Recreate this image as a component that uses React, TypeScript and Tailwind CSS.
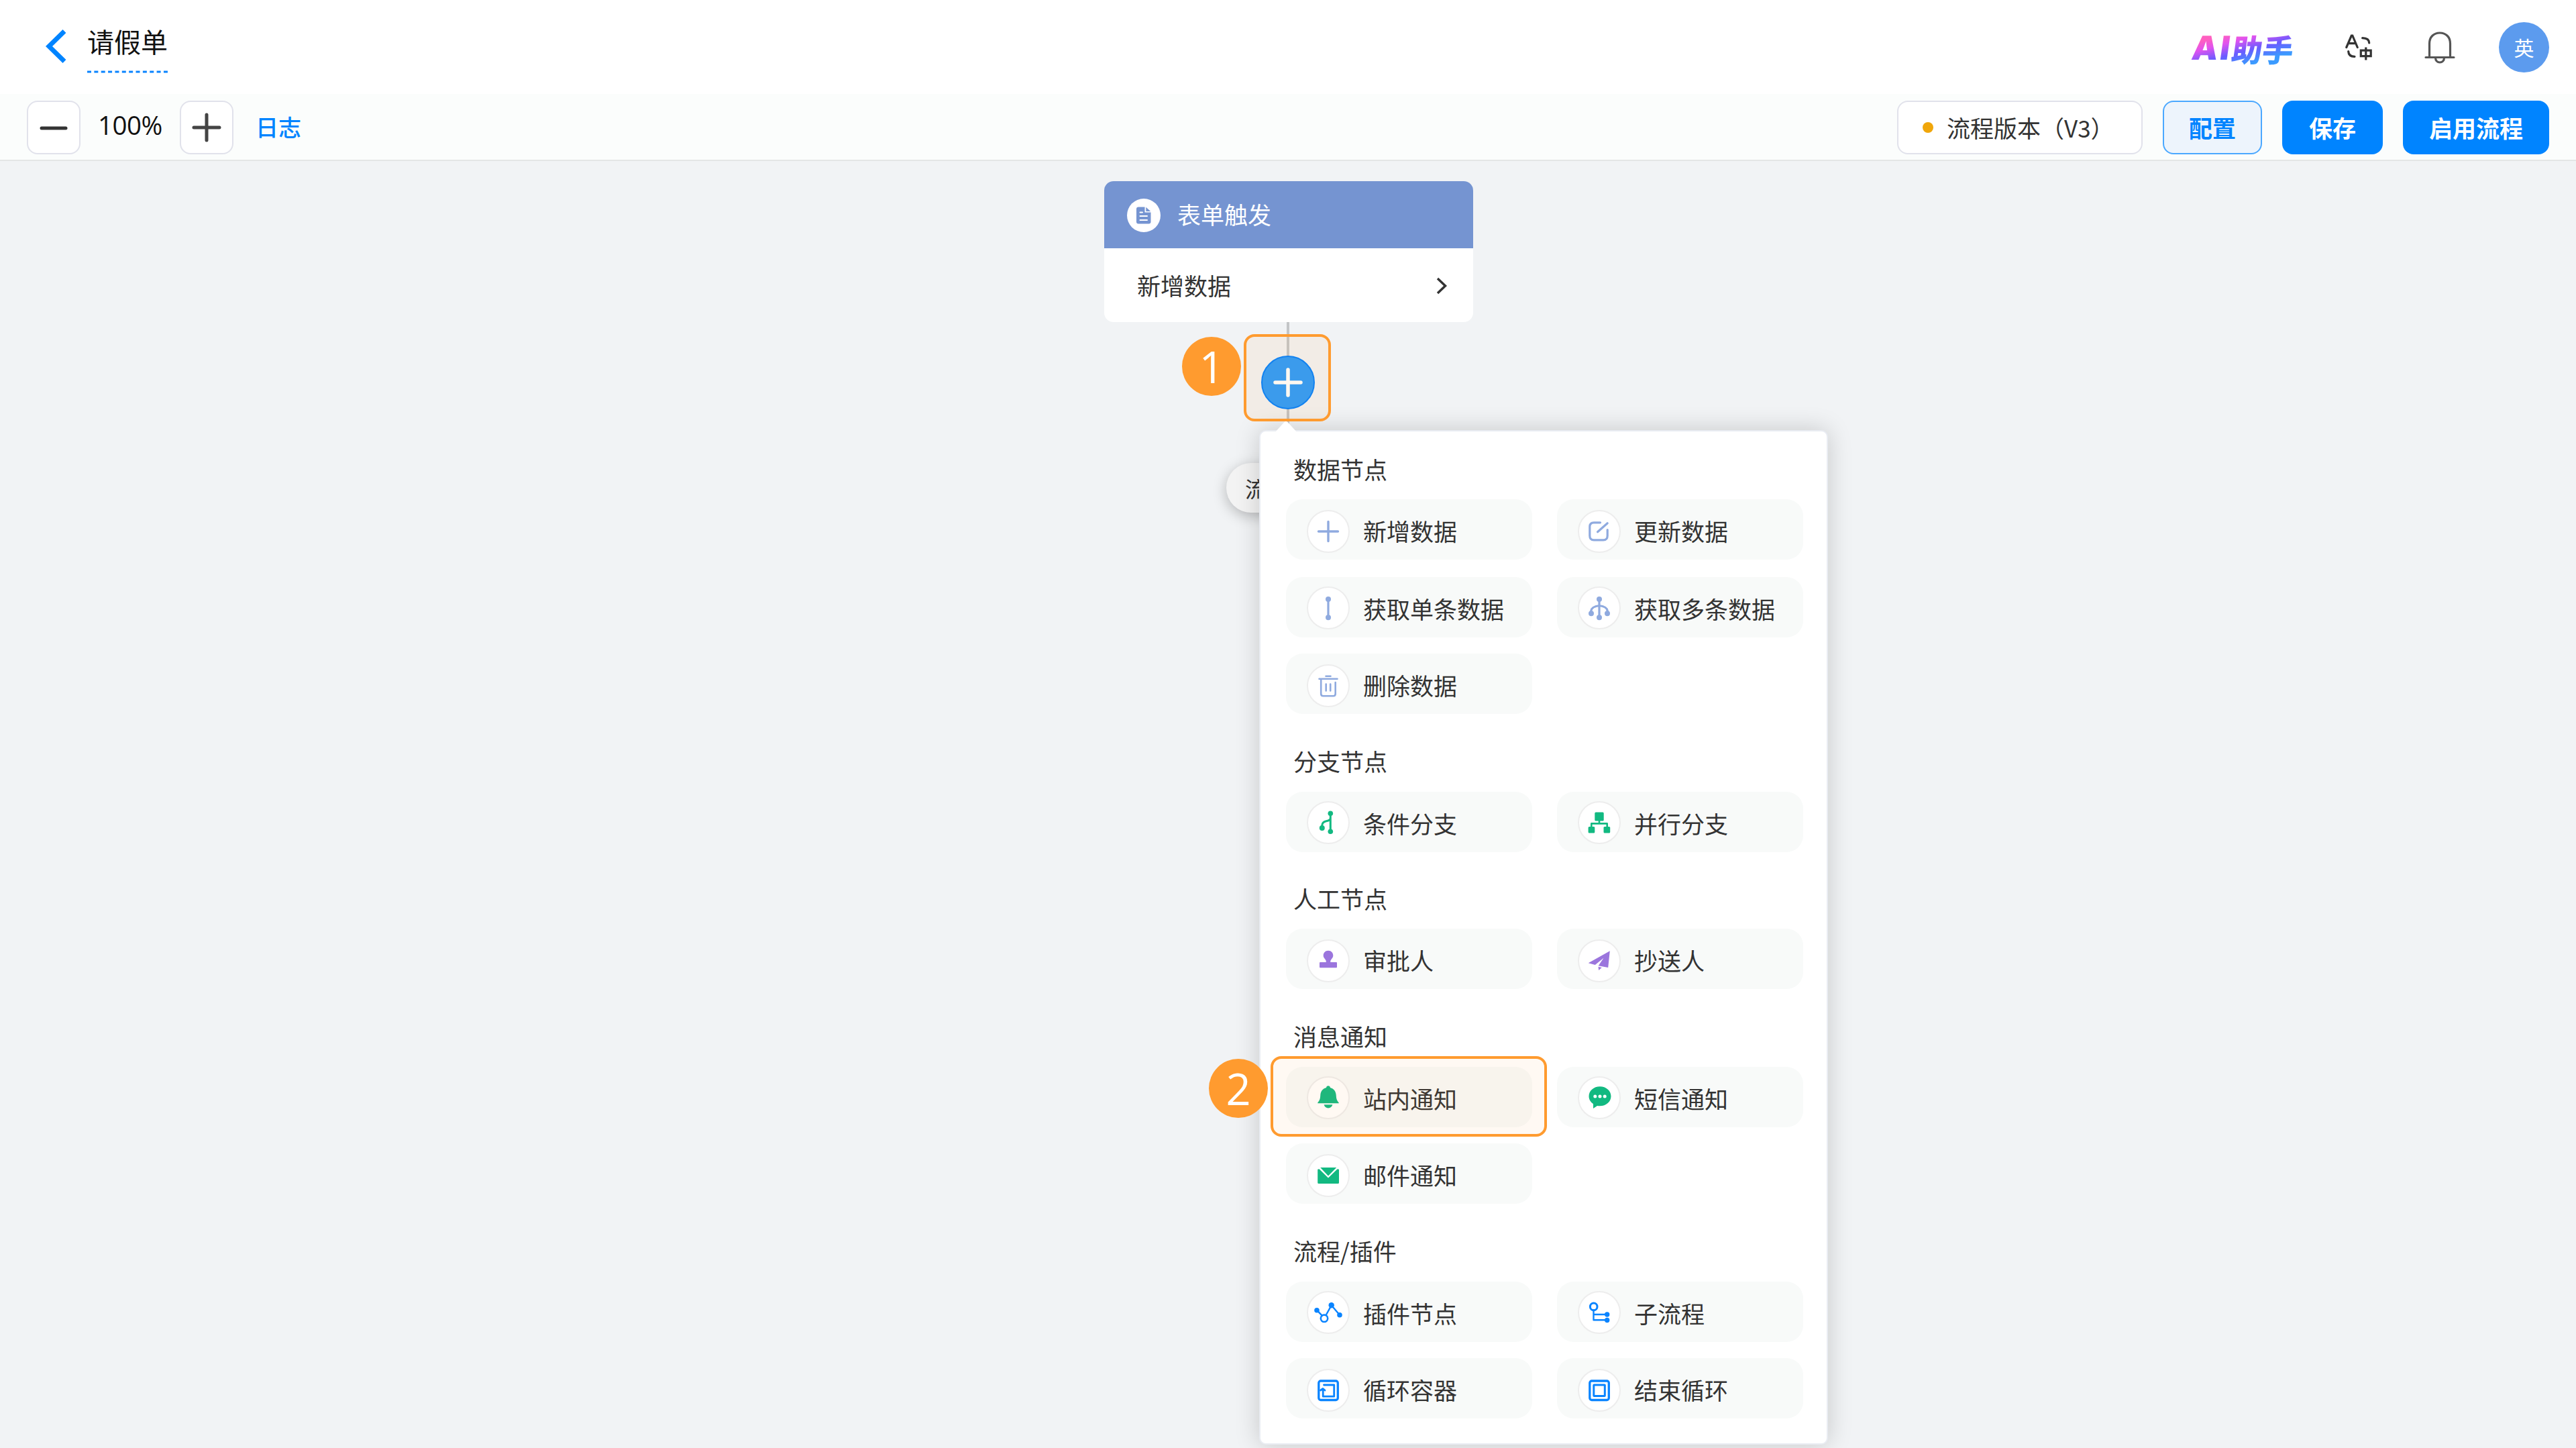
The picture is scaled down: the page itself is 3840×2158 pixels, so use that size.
import type { ReactNode } from "react";

type NodeItem = { label: string; icon: ReactNode; tint: string };
type Section = { title: string; rows: { low: boolean; items: NodeItem[] }[] };

const BLUE = "text-[#8faadf]";
const GREEN = "text-[#12b981]";
const PURPLE = "text-[#9b75dd]";
const AZURE = "text-[#0a84ff]";

function Glyph({ children, width = 3 }: { children: ReactNode; width?: number }) {
  return (
    <svg viewBox="0 0 64 64" className="h-16 w-16 shrink-0" fill="none" stroke="currentColor" strokeWidth={width} strokeLinecap="round" strokeLinejoin="round">
      {children}
    </svg>
  );
}

const Dot = ({ x, y, r = 4 }: { x: number; y: number; r?: number }) => (
  <circle cx={x} cy={y} r={r} fill="currentColor" stroke="none" />
);

const icons = {
  plus: (
    <Glyph width={3.4}>
      <path d="M32 17.5V46.500M17.500 32H46.500" />
    </Glyph>
  ),
  edit: (
    <Glyph width={3.2}>
      <path d="M33.500 18.800H24Q17.800 18.800 17.800 25V38.500Q17.800 44.800 24 44.800H38Q44.200 44.800 44.200 38.500V29.500" />
      <path d="M29.500 32.800L44.200 19.800" />
    </Glyph>
  ),
  single: (
    <Glyph width={3.2}>
      <path d="M32 19V46" />
      <Dot x={32} y={19} />
      <Dot x={32} y={46.300} />
    </Glyph>
  ),
  multi: (
    <Glyph width={3.2}>
      <path d="M32 19V46M19.700 40V36.500Q20.500 30 32 28.500Q43.500 30 44.300 36.500V40" />
      <Dot x={32} y={19} />
      <Dot x={32} y={46.300} />
      <Dot x={20} y={40.300} />
      <Dot x={44} y={40.300} />
    </Glyph>
  ),
  trash: (
    <Glyph width={2.6}>
      <path d="M18.500 21.700H45.500M28.500 17.700H35.500M21.200 22V44Q21.200 47.300 24.500 47.300H39.500Q42.700 47.300 42.700 44V27M28.700 29.500V39.500M35.200 29.500V39.500" />
    </Glyph>
  ),
  branch: (
    <Glyph width={3}>
      <path d="M35.300 18.300V45.300M22.700 40V36.500Q23 31 29 29.800Q35 28.800 35.300 25.500" />
      <Dot x={35.300} y={18.300} r={3.800} />
      <Dot x={35.300} y={45.300} r={3.800} />
      <Dot x={22.800} y={40} r={4} />
    </Glyph>
  ),
  parallel: (
    <Glyph width={2.6}>
      <path d="M32 28V33.400M20.300 39V33.400H43.700V39" />
      <g fill="currentColor" stroke="none">
        <rect x="25.300" y="16.500" width="13.400" height="13" rx="1.500" />
        <rect x="15.600" y="38" width="9.700" height="9.500" rx="1.500" />
        <rect x="38.500" y="38" width="9.700" height="9.500" rx="1.500" />
      </g>
    </Glyph>
  ),
  stamp: (
    <Glyph>
      <path
        fill="currentColor"
        stroke="none"
        d="M32 16.700C27.500 16.700 24.700 20 24.700 24C24.700 28 28.700 30 28.700 32.500V34H20Q19 34 19 35V41.200Q19 42.200 20 42.200H44Q45 42.200 45 41.200V35Q45 34 44 34H35.300V32.500C35.300 30 39.300 28 39.300 24C39.300 20 36.500 16.700 32 16.700Z"
      />
    </Glyph>
  ),
  plane: (
    <Glyph>
      <path fill="currentColor" stroke="none" d="M47.800 17.300L15.700 35.300L25.800 37.900L38.500 27.800L30.700 39.200L45.200 41.900ZM30.500 40.700L35.800 42L31.200 45.900Z" />
    </Glyph>
  ),
  bell: (
    <Glyph>
      <path
        fill="currentColor"
        stroke="none"
        d="M32 14.200C30.200 14.200 29.200 15.300 29 17C23.500 18.500 20.700 22.500 20.300 28C20 33 19.500 36 16.300 39.200V40.300H47.700V39.200C44.500 36 44 33 43.700 28C43.300 22.500 40.500 18.500 35 17C34.800 15.300 33.800 14.200 32 14.200ZM25.600 42.200H38.400C37.500 45.600 35.200 47.400 32 47.400C28.800 47.400 26.500 45.600 25.600 42.200Z"
      />
    </Glyph>
  ),
  chat: (
    <Glyph>
      <path fill="currentColor" stroke="none" d="M33 15.300C42.200 15.300 49.500 21.600 49.500 29.800C49.500 38 42.200 44.300 33 44.300C31.500 44.300 30.200 44.200 29 44L23 48V41.200C19 38.500 16.500 34.500 16.500 29.800C16.500 21.600 23.800 15.300 33 15.300Z" />
      <g fill="white" stroke="none">
        <circle cx="25.800" cy="30" r="2.500" />
        <circle cx="33" cy="30" r="2.500" />
        <circle cx="40.200" cy="30" r="2.500" />
      </g>
    </Glyph>
  ),
  mail: (
    <Glyph>
      <path fill="currentColor" stroke="none" d="M20.200 20H44.200L32 32.600ZM16.200 22.800L18.500 22.200L32 35.600L45.600 22.200L48 22.800V42.500Q48 44 46.500 44H17.700Q16.200 44 16.200 42.500Z" />
    </Glyph>
  ),
  plugin: (
    <Glyph width={2.4}>
      <path d="M15 28.700L23 36.800M28.600 36L36.700 21.300L49 35.700" />
      <circle cx="26" cy="40.800" r="5.200" strokeWidth={2.600} />
      <Dot x={15} y={28.700} r={3.800} />
      <Dot x={36.700} y={21.300} r={4.200} />
      <Dot x={49} y={35.700} r={3.800} />
    </Glyph>
  ),
  subflow: (
    <Glyph width={2.4}>
      <path d="M23.500 28.500V43.300H43.500M23.500 35H43.500" />
      <circle cx="23.700" cy="23.400" r="5.300" strokeWidth={3} />
      <Dot x={43.700} y={35} r={3.700} />
      <Dot x={43.700} y={43.500} r={3.700} />
    </Glyph>
  ),
  loop: (
    <Glyph width={3}>
      <rect x="17.800" y="18" width="28.500" height="28.500" rx="3" strokeWidth={3.300} />
      <path d="M25.500 24H40.700V41.200H24.200V31.500M20.500 32L24 29.500L27 32" strokeWidth={2.800} />
    </Glyph>
  ),
  stop: (
    <Glyph width={3}>
      <rect x="17.800" y="18" width="28.500" height="28.500" rx="3" strokeWidth={3.300} />
      <rect x="23.800" y="24" width="16.500" height="16.500" rx="0.500" />
    </Glyph>
  ),
};

const sections: Section[] = [
  {
    title: "数据节点",
    rows: [
      { low: true, items: [{ label: "新增数据", icon: icons.plus, tint: BLUE }, { label: "更新数据", icon: icons.edit, tint: BLUE }] },
      { low: false, items: [{ label: "获取单条数据", icon: icons.single, tint: BLUE }, { label: "获取多条数据", icon: icons.multi, tint: BLUE }] },
      { low: true, items: [{ label: "删除数据", icon: icons.trash, tint: BLUE }] },
    ],
  },
  {
    title: "分支节点",
    rows: [{ low: false, items: [{ label: "条件分支", icon: icons.branch, tint: GREEN }, { label: "并行分支", icon: icons.parallel, tint: GREEN }] }],
  },
  {
    title: "人工节点",
    rows: [{ low: true, items: [{ label: "审批人", icon: icons.stamp, tint: PURPLE }, { label: "抄送人", icon: icons.plane, tint: PURPLE }] }],
  },
  {
    title: "消息通知",
    rows: [
      { low: false, items: [{ label: "站内通知", icon: icons.bell, tint: GREEN }, { label: "短信通知", icon: icons.chat, tint: GREEN }] },
      { low: true, items: [{ label: "邮件通知", icon: icons.mail, tint: GREEN }] },
    ],
  },
  {
    title: "流程/插件",
    rows: [
      { low: false, items: [{ label: "插件节点", icon: icons.plugin, tint: AZURE }, { label: "子流程", icon: icons.subflow, tint: AZURE }] },
      { low: true, items: [{ label: "循环容器", icon: icons.loop, tint: AZURE }, { label: "结束循环", icon: icons.stop, tint: AZURE }] },
    ],
  },
];

function Header() {
  return (
    <header className="flex h-[140px] shrink-0 items-start justify-between bg-white pr-10 pl-[68px]">
      <div className="flex">
        <svg viewBox="0 0 32 52" className="mt-[43px] h-[52px] w-8" fill="none" stroke="#0084ff" strokeWidth="7">
          <path d="M28 3.500L5 26L28 48.500" />
        </svg>
        <div className="ml-[30px] flex flex-col">
          <span className="mt-[31px] h-[60px] text-[40px] leading-[60px] text-[#111]">请假单</span>
          <svg viewBox="0 0 120 4" className="mt-[14px] h-1 w-[120px]" stroke="#0a84ff" strokeWidth="3">
            <path d="M0 2H120" strokeDasharray="6 4.360" />
          </svg>
        </div>
      </div>
      <div className="flex h-[140px] items-center">
        <div className="mt-[3px] flex skew-x-[-8deg] items-center bg-linear-[165deg,#ff5fc0_22%,#e052f0_36%,#6a5cff_55%,#3b9bff_76%] bg-clip-text text-transparent">
          <span className="font-['Inter'] text-[49px] leading-[60px] font-black tracking-[3px]">AI</span>
          <span className="text-[46px] leading-[60px] font-black">助手</span>
        </div>
        <svg viewBox="0 0 40 40" className="mt-[2px] ml-[77px] h-10 w-10" fill="none" stroke="#333" strokeWidth="3.200" strokeLinecap="round">
          <path d="M1.800 19.500L9.300 2H10.800L18.200 19.500M4.800 13.600H15.400M25.700 5.600Q35.500 5.800 35.700 13M4.700 25.600Q5 33.300 14 33.300" />
          <path d="M23.300 24.200H38.200V32.600H23.300ZM30.800 19.500V38.500" strokeLinecap="butt" />
        </svg>
        <svg viewBox="0 0 46 48" className="mt-[2px] ml-[78px] h-12 w-[46px]" fill="none" stroke="#555" strokeWidth="3.200" strokeLinecap="round">
          <path d="M7.500 38V18C7.500 8 14 2 23 2C32 2 38.500 8 38.500 18V38M2 38.500H44M16.500 39C16.500 43.500 19.500 46 23 46C26.500 46 29.500 43.500 29.500 39" />
        </svg>
        <span className="ml-[65px] flex h-[75px] w-[75px] items-center justify-center rounded-full bg-[#5c9bee] text-[30px] text-white">英</span>
      </div>
    </header>
  );
}

function Toolbar() {
  return (
    <div className="flex h-[100px] shrink-0 items-start justify-between border-b-2 border-[#e4e6e6] bg-[#fbfdfc] px-10 pt-2.5">
      <div className="flex h-20 items-center">
        <button className="flex h-20 w-20 items-center justify-center rounded-2xl border-2 border-[#e1e2eb] bg-white">
          <svg viewBox="0 0 44 44" className="h-11 w-11" stroke="#333" strokeWidth="5" strokeLinecap="round">
            <path d="M4 23H40" />
          </svg>
        </button>
        <span className="mb-[9px] w-[148px] text-center font-['Open_Sans'] text-[38.5px] leading-[50px] tracking-[-0.5px] text-[#111]">100%</span>
        <button className="flex h-20 w-20 items-center justify-center rounded-2xl border-2 border-[#e1e2eb] bg-white">
          <svg viewBox="0 0 44 44" className="h-11 w-11" stroke="#444" strokeWidth="5" strokeLinecap="round">
            <path d="M3 22H41M22 3V41" />
          </svg>
        </button>
        <a className="mb-[3px] ml-[33px] text-[34px] font-medium text-[#0084ff]">日志</a>
      </div>
      <div className="flex text-[35px] leading-[76px]">
        <div className="flex h-20 w-[366px] items-center rounded-2xl border-2 border-[#e1e2eb] bg-white pl-9 text-[#333]">
          <span className="mr-5 h-4 w-4 rounded-full bg-[#f0a60a]" />
          <span className="whitespace-nowrap">流程版本（V3）</span>
        </div>
        <button className="ml-[30px] h-20 w-[148px] rounded-2xl border-2 border-[#4ba8ff] bg-[#edf4fc] font-bold text-[#0084ff]">配置</button>
        <button className="ml-[30px] h-20 w-[150px] rounded-2xl bg-[#0084ff] font-bold text-white">保存</button>
        <button className="ml-[30px] h-20 w-[218px] rounded-2xl bg-[#0084ff] font-bold text-white">启用流程</button>
      </div>
    </div>
  );
}

function NodeMenu() {
  return (
    <div className="absolute top-[401px] left-[1877px] h-[1512px] w-[848px] rounded-[10px] border-2 border-[#e9ecf2] bg-white pt-8 pl-[38px] shadow-[0_0_36px_rgba(0,0,0,0.18)]">
      <svg viewBox="0 0 34 18" className="absolute top-[-16px] left-[21px] h-[18px] w-[34px]" fill="white">
        <path d="M0 18L14.500 2Q17 0 19.500 2L34 18Z" />
      </svg>
      <div className="flex flex-col gap-[46px]">
        {sections.map((section) => (
          <section key={section.title} className="flex flex-col">
            <h3 className="pl-[11px] text-[35px] leading-[48px] text-[#333]">{section.title}</h3>
            <div className="mt-[21px] flex flex-col gap-[25px]">
              {section.rows.map((row) => (
                <div key={row.items[0].label} className={`flex gap-[37px] ${row.low ? "" : "mt-px -mb-px"}`}>
                  {row.items.map((item) => (
                    <div key={item.label} className="flex h-[90px] w-[367px] items-center rounded-[25px] bg-[#f8faf9] pl-[31px]">
                      <span
                        className={`flex h-16 w-16 shrink-0 items-center justify-center rounded-full border-2 border-[#ededed] bg-white ${row.low ? "mt-[5px]" : "mt-[1px]"} ${item.tint}`}
                      >
                        {item.icon}
                      </span>
                      <span className="mt-[3px] ml-5 text-[35px] leading-[48px] whitespace-nowrap text-[#333]">{item.label}</span>
                    </div>
                  ))}
                </div>
              ))}
            </div>
          </section>
        ))}
      </div>
    </div>
  );
}

function StepBadge({ n, place }: { n: number; place: string }) {
  return (
    <span className={`absolute flex h-[88px] w-[88px] items-center justify-center rounded-full bg-[#ff9b2f] font-['Open_Sans'] text-[65px] leading-none text-white ${place}`}>
      {n}
    </span>
  );
}

function FlowCanvas() {
  return (
    <main className="relative grow overflow-hidden bg-[#f1f3f5]">
      <div className="absolute top-[30px] left-[1646px] w-[550px] overflow-hidden rounded-[14px] bg-white">
        <div className="flex h-[100px] items-center bg-[#7594d1] pl-[34px]">
          <span className="mt-px flex h-[50px] w-[50px] items-center justify-center rounded-full bg-white">
            <svg viewBox="0 0 22 26" className="h-[26px] w-[22px]">
              <path fill="#7594d1" d="M3 0.500H12.500V8.500H21.500V22.500Q21.500 25.500 18.500 25.500H3Q0 25.500 0 22.500V3.500Q0 0.500 3 0.500ZM14.300 0.800L21.200 7H14.300Z" />
              <path stroke="white" strokeWidth="2" strokeLinecap="round" d="M5.500 8.500H9M5.500 14H16M5.500 20H16" />
            </svg>
          </span>
          <span className="mb-[2px] ml-[25px] text-[35px] leading-[48px] text-white">表单触发</span>
        </div>
        <div className="flex h-[110px] items-center justify-between pr-[38px] pl-[49px]">
          <span className="text-[35px] leading-[48px] text-[#333]">新增数据</span>
          <svg viewBox="0 0 18 26" className="mt-[2px] h-[26px] w-[18px]" fill="none" stroke="#333" strokeWidth="3.500">
            <path d="M3 2L14.500 13L3 24" />
          </svg>
        </div>
      </div>

      <div className="absolute top-[240px] left-[1918px] h-[160px] w-1 bg-[#c3c5c7]" />
      <div className="absolute top-[290px] left-[1880px] flex h-20 w-20 items-center justify-center rounded-full border-2 border-[#0080ff] bg-[#2d9bfb]">
        <svg viewBox="0 0 44 44" className="h-11 w-11" stroke="white" strokeWidth="5.500" strokeLinecap="round">
          <path d="M3 22H41M22 3V41" />
        </svg>
      </div>
      <div className="absolute top-[450px] left-[1828px] flex h-[74px] w-[184px] items-center rounded-full bg-[#f3f3f3] pl-[28px] text-[32px] text-[#333] shadow-[0_5px_20px_rgba(0,0,0,0.25)]">
        流
      </div>

      <NodeMenu />

      <div className="absolute top-[258px] left-[1854px] h-[130px] w-[130px] rounded-2xl border-4 border-[#ff9b2f] bg-[#ff9b2f]/7" />
      <StepBadge n={1} place="top-[262px] left-[1762px]" />
      <div className="absolute top-[1334px] left-[1894px] h-[120px] w-[412px] rounded-2xl border-4 border-[#ff9b2f] bg-[#ff9b2f]/6" />
      <StepBadge n={2} place="top-[1338px] left-[1802px]" />
    </main>
  );
}

export default function App() {
  return (
    <div className="flex h-[2158px] w-[3840px] flex-col overflow-hidden font-['Noto_Sans_CJK_SC',sans-serif]">
      <Header />
      <Toolbar />
      <FlowCanvas />
    </div>
  );
}
